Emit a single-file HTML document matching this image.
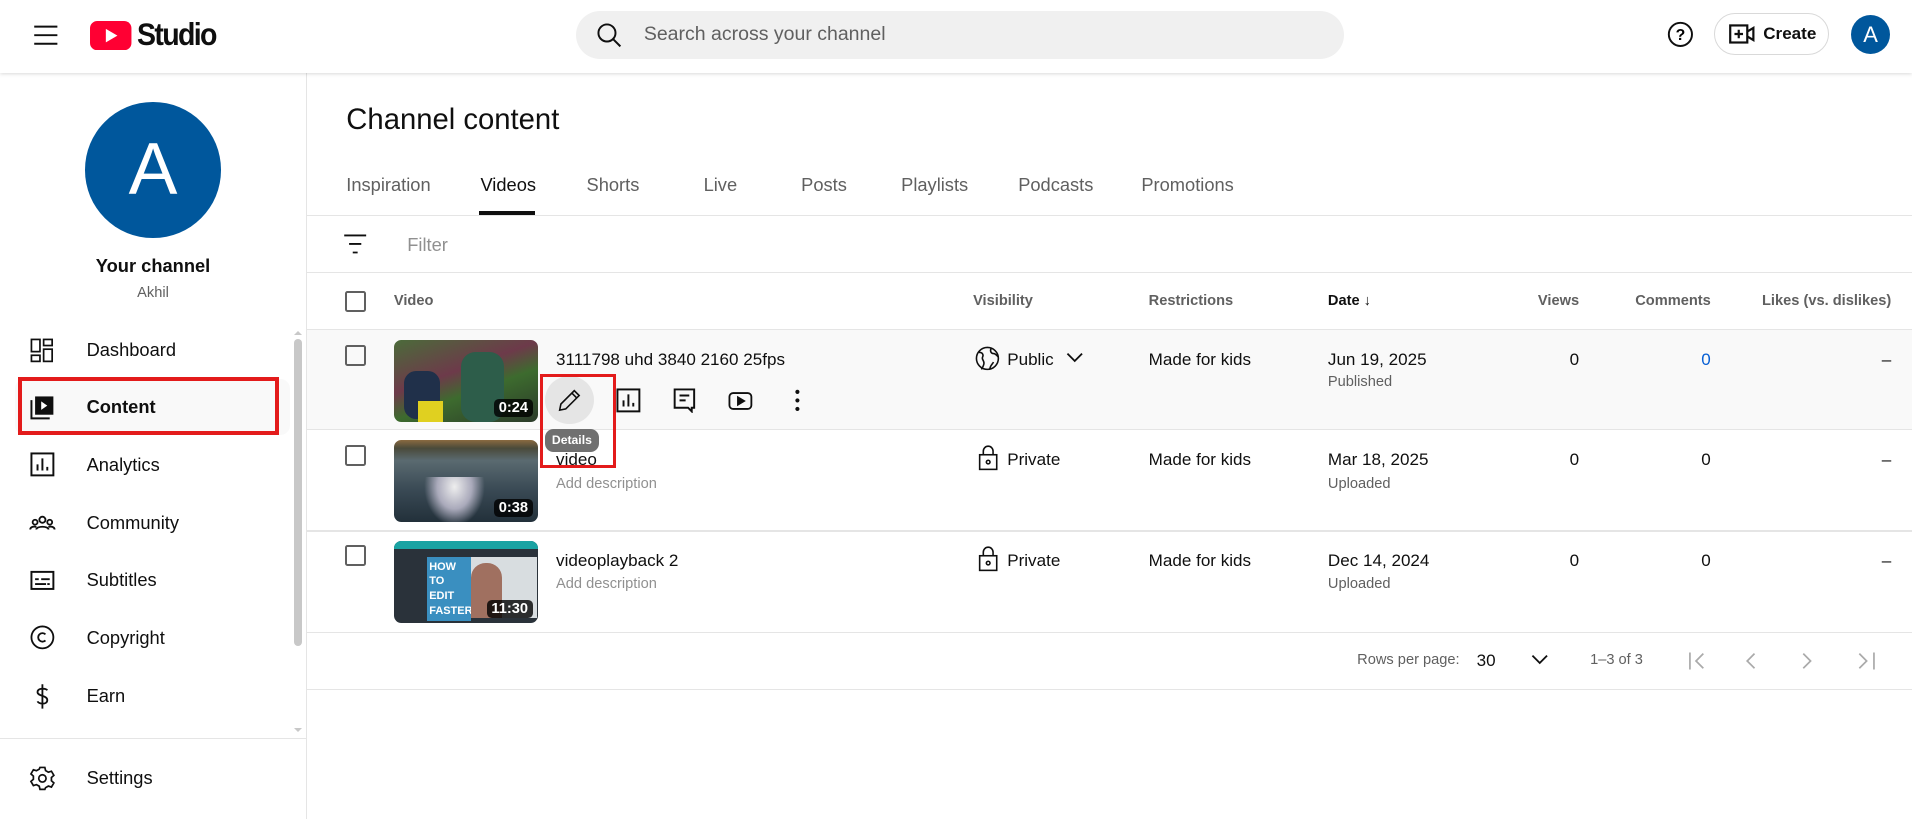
<!DOCTYPE html>
<html><head><meta charset="utf-8"><style>
html,body{margin:0;padding:0;background:#fff;overflow:hidden}
body{width:1568px;height:672px;zoom:1.219388;position:relative;font-family:"Liberation Sans",Roboto,Arial,sans-serif;color:#0f0f0f}
.a{position:absolute}
.hdr{left:0;top:0;width:1568px;height:60px;background:#fff;box-shadow:0 1px 3px rgba(0,0,0,.15);z-index:3}
.side{left:0;top:60px;width:251px;height:612px;border-right:1px solid #e5e5e5}
.nav{left:0;width:240px;height:46px;font-size:15px;line-height:46px}
.nav span{position:absolute;left:71px}
.nav svg{position:absolute;left:24px;top:12px}
.tab{top:143px;font-size:15px;color:#606060;font-weight:500}
.hl{left:252px;width:1316px;height:1px;background:#e5e5e5}
.th{top:240px;font-size:12px;color:#606060;font-weight:bold}
.cb{width:14px;height:14px;border:2px solid #606060;border-radius:2px}
.row{left:252px;width:1316px;height:82px}
.thumb{left:323px;width:118px;height:67px;border-radius:6px;overflow:hidden}
.dur{position:absolute;right:4px;bottom:4px;background:rgba(0,0,0,.8);color:#fff;font-size:12px;font-weight:bold;padding:1px 4px;border-radius:4px}
.t14{font-size:14px}
.sub{font-size:12px;color:#909090}
</style></head><body>
<div class="a hdr">
 <svg class="a" style="left:27px;top:19px" width="22" height="20" viewBox="0 0 22 20"><path d="M1 3h19M1 10h19M1 17h19" stroke="#0f0f0f" stroke-width="1.6"/></svg>
 <svg class="a" style="left:74px;top:17px" width="34" height="24" viewBox="0 0 34 24"><rect width="34" height="24" rx="6" fill="#ff0033"/><path d="M13 6.5v11l9.5-5.5z" fill="#fff"/></svg>
 <div class="a" style="left:112px;top:13px;font-size:26px;font-weight:bold;letter-spacing:-1.5px;transform:scaleX(.9);transform-origin:left">Studio</div>
 <div class="a" style="left:472px;top:9px;width:630px;height:39px;border-radius:20px;background:#f0f0f0"></div>
 <svg class="a" style="left:489px;top:18px" width="22" height="22" viewBox="0 0 22 22"><circle cx="9" cy="9" r="7" fill="none" stroke="#0f0f0f" stroke-width="1.6"/><path d="M14 14l6 6" stroke="#0f0f0f" stroke-width="1.6"/></svg>
 <div class="a" style="left:528px;top:19px;font-size:16px;color:#606060">Search across your channel</div>
 <svg class="a" style="left:1367px;top:17px" width="22" height="22" viewBox="0 0 22 22"><circle cx="11" cy="11" r="9.5" fill="none" stroke="#0f0f0f" stroke-width="1.6"/><text x="11" y="15.5" text-anchor="middle" font-size="13" font-weight="bold" font-family="Liberation Sans">?</text></svg>
 <div class="a" style="left:1406px;top:11px;width:94px;height:34px;border:1px solid #d9d9d9;border-radius:18px;box-sizing:border-box"></div>
 <svg class="a" style="left:1418px;top:19px" width="22" height="18" viewBox="0 0 22 18"><rect x="1" y="2" width="14" height="14" fill="none" stroke="#0f0f0f" stroke-width="1.8"/><path d="M15 7l5-3v10l-5-3M8 5.5v7M4.5 9h7" stroke="#0f0f0f" stroke-width="1.8" fill="none"/></svg>
 <div class="a" style="left:1446px;top:20px;font-size:14px;font-weight:bold">Create</div>
 <div class="a" style="left:1518px;top:12px;width:32px;height:32px;border-radius:50%;background:#00579c;color:#fff;font-size:18px;text-align:center;line-height:32px">A</div>
</div>

<div class="a side"></div>
<div class="a" style="left:70px;top:84px;width:111px;height:111px;border-radius:50%;background:#00579c;color:#fff;font-size:60px;text-align:center;line-height:111px">A</div>
<div class="a" style="left:0;width:251px;top:209px;text-align:center;font-size:15px;font-weight:bold">Your channel</div>
<div class="a" style="left:0;width:251px;top:234px;text-align:center;font-size:12px;color:#606060">Akhil</div>

<div class="a nav" style="top:264px"><svg width="22" height="22" viewBox="0 0 22 22" fill="none" stroke="#0f0f0f" stroke-width="1.4"><rect x="2" y="2" width="7" height="10"/><rect x="12" y="2" width="7" height="5"/><rect x="2" y="15" width="7" height="5"/><rect x="12" y="10" width="7" height="10"/></svg><span>Dashboard</span></div>
<div class="a" style="left:12px;top:311px;width:226px;height:46px;border-radius:8px;background:#f9f9f9"></div>
<div class="a nav" style="top:311px;font-weight:bold"><svg width="22" height="22" viewBox="0 0 22 22"><rect x="5" y="2" width="15" height="15" fill="#0f0f0f"/><path d="M2 5v15h15" stroke="#0f0f0f" stroke-width="1.6" fill="none"/><path d="M10 6v7l5-3.5z" fill="#fff"/></svg><span>Content</span></div>
<div class="a" style="left:15px;top:309px;width:214px;height:48px;border:4px solid #e31b1b;box-sizing:border-box"></div>
<div class="a nav" style="top:358px"><svg width="22" height="22" viewBox="0 0 22 22" fill="none" stroke="#0f0f0f" stroke-width="1.6"><rect x="2" y="2" width="18" height="18"/><path d="M7 16v-5M11 16V6M15 16v-3"/></svg><span>Analytics</span></div>
<div class="a nav" style="top:406px"><svg width="22" height="22" viewBox="0 0 22 22" fill="none" stroke="#0f0f0f" stroke-width="1.5"><circle cx="11" cy="8" r="2.5"/><circle cx="5" cy="10" r="2"/><circle cx="17" cy="10" r="2"/><path d="M6 16c0-3 10-3 10 0M1 16c0-2 3-3 5-2M21 16c0-2-3-3-5-2"/></svg><span>Community</span></div>
<div class="a nav" style="top:453px"><svg width="22" height="22" viewBox="0 0 22 22" fill="none" stroke="#0f0f0f" stroke-width="1.6"><rect x="2" y="4" width="18" height="14"/><path d="M5 10h3M10 10h7M5 14h9M15 14h2"/></svg><span>Subtitles</span></div>
<div class="a nav" style="top:500px"><svg width="22" height="22" viewBox="0 0 22 22" fill="none" stroke="#0f0f0f" stroke-width="1.5"><circle cx="11" cy="11" r="9"/><path d="M13.5 8.5a3.5 3.5 0 1 0 0 5"/></svg><span>Copyright</span></div>
<div class="a nav" style="top:548px"><svg width="22" height="22" viewBox="0 0 22 22" fill="none" stroke="#0f0f0f" stroke-width="1.5"><path d="M11 1v20M15 6c-1-2-8-2-8 1.5S15 10 15 14s-7 3.5-8 1"/></svg><span>Earn</span></div>
<div class="a" style="left:241px;top:278px;width:7px;height:252px;border-radius:4px;background:#c8c8c8"></div>
<div class="a" style="left:241px;top:268px;width:0;height:0;border:4px solid transparent;border-bottom-color:#c8c8c8"></div>
<div class="a" style="left:241px;top:597px;width:0;height:0;border:4px solid transparent;border-top-color:#c8c8c8"></div>
<div class="a" style="left:0;top:605px;width:251px;height:1px;background:#e5e5e5"></div>
<div class="a nav" style="top:615px"><svg width="22" height="22" viewBox="0 0 22 22" fill="none" stroke="#0f0f0f" stroke-width="1.4"><circle cx="11" cy="11" r="3"/><path d="M9 2h4l.6 2.6 2.3 1.3 2.5-.8 2 3.4-2 1.8v2.6l2 1.8-2 3.4-2.5-.8-2.3 1.3L13 20H9l-.6-2.6-2.3-1.3-2.5.8-2-3.4 2-1.8V9.1l-2-1.8 2-3.4 2.5.8 2.3-1.3z"/></svg><span>Settings</span></div>

<div class="a" style="left:284px;top:85px;font-size:24px;font-weight:500">Channel content</div>
<div class="a tab" style="left:284px">Inspiration</div>
<div class="a tab" style="left:394px;color:#0f0f0f">Videos</div>
<div class="a" style="left:393px;top:173px;width:46px;height:3px;background:#0f0f0f"></div>
<div class="a tab" style="left:481px">Shorts</div>
<div class="a tab" style="left:577px">Live</div>
<div class="a tab" style="left:657px">Posts</div>
<div class="a tab" style="left:739px">Playlists</div>
<div class="a tab" style="left:835px">Podcasts</div>
<div class="a tab" style="left:936px">Promotions</div>
<div class="a hl" style="top:176px"></div>
<svg class="a" style="left:281px;top:191px" width="20" height="18" viewBox="0 0 20 18"><path d="M1 2h18M5 9h10M8 16h4" stroke="#0f0f0f" stroke-width="1.5"/></svg>
<div class="a" style="left:334px;top:192px;font-size:15px;color:#909090">Filter</div>
<div class="a hl" style="top:223px"></div>
<div class="a cb" style="left:283px;top:239px"></div>
<div class="a th" style="left:323px">Video</div>
<div class="a th" style="left:798px">Visibility</div>
<div class="a th" style="left:942px">Restrictions</div>
<div class="a th" style="left:1089px;color:#0f0f0f">Date ↓</div>
<div class="a th" style="left:1195px;width:100px;text-align:right">Views</div>
<div class="a th" style="left:1303px;width:100px;text-align:right">Comments</div>
<div class="a th" style="left:1400px;width:151px;text-align:right">Likes (vs. dislikes)</div>
<div class="a hl" style="top:270px"></div>

<div class="a row" style="top:271px;background:#f9f9f9"></div>
<div class="a hl" style="top:352px"></div>
<div class="a hl" style="top:435px"></div>
<div class="a hl" style="top:518px"></div>
<div class="a hl" style="top:565px"></div>

<!-- row1 -->
<div class="a cb" style="left:283px;top:283px"></div>
<div class="a thumb" style="top:279px;background:linear-gradient(160deg,#4b6b3a 0%,#6d3a4a 40%,#3d6b2e 60%,#2b3a2a 100%)"><div style="position:absolute;left:8px;top:25px;width:30px;height:40px;background:#20304a;border-radius:10px"></div><div style="position:absolute;left:20px;top:50px;width:20px;height:17px;background:#e0d020"></div><div style="position:absolute;left:55px;top:10px;width:35px;height:57px;background:#2d5d4a;border-radius:12px"></div><span class="dur">0:24</span></div>
<div class="a t14" style="left:456px;top:287px">3111798 uhd 3840 2160 25fps</div>
<div class="a" style="left:447px;top:308px;width:40px;height:40px;border-radius:50%;background:#e5e5e5"></div>
<svg class="a" style="left:456px;top:317px" width="22" height="22" viewBox="0 0 22 22" fill="none" stroke="#0f0f0f" stroke-width="1.3"><path d="M3 19l1-5L15 3l4 4L8 18z M13 5l4 4"/></svg>
<svg class="a" style="left:504px;top:317px" width="22" height="22" viewBox="0 0 22 22" fill="none" stroke="#0f0f0f" stroke-width="1.6"><rect x="2" y="2" width="18" height="18"/><path d="M7 16v-5M11 16V6M15 16v-3"/></svg>
<svg class="a" style="left:550px;top:317px" width="22" height="22" viewBox="0 0 22 22" fill="none" stroke="#0f0f0f" stroke-width="1.6"><path d="M3 2h16v15h-2v3l-3-3H3z"/><path d="M7 7h8M7 11h5"/></svg>
<svg class="a" style="left:596px;top:317px" width="22" height="22" viewBox="0 0 22 22" fill="none" stroke="#0f0f0f" stroke-width="1.5"><rect x="2" y="5" width="18" height="13" rx="3"/><path d="M9 8.5v6l5-3z" fill="#0f0f0f"/></svg>
<svg class="a" style="left:643px;top:317px" width="22" height="22" viewBox="0 0 22 22" fill="#0f0f0f"><circle cx="11" cy="4" r="1.7"/><circle cx="11" cy="11" r="1.7"/><circle cx="11" cy="18" r="1.7"/></svg>
<svg class="a" style="left:799px;top:283px" width="22" height="22" viewBox="0 0 22 22" fill="none" stroke="#0f0f0f" stroke-width="1.3"><circle cx="11" cy="11" r="9"/><path d="M4 6c3 0 4 2 3 4s2 3 1 6-2 4-2 4M14 3c-1 2 0 4 2 4s3 2 4 3M13 20c0-3 2-4 3-6"/></svg>
<div class="a t14" style="left:826px;top:287px">Public</div>
<svg class="a" style="left:873px;top:287px" width="16" height="12" viewBox="0 0 16 12"><path d="M2 3l6 6 6-6" stroke="#0f0f0f" stroke-width="1.5" fill="none"/></svg>
<div class="a t14" style="left:942px;top:287px">Made for kids</div>
<div class="a t14" style="left:1089px;top:287px">Jun 19, 2025</div>
<div class="a sub" style="left:1089px;top:307px;color:#606060">Published</div>
<div class="a t14" style="left:1195px;top:287px;width:100px;text-align:right">0</div>
<div class="a t14" style="left:1303px;top:287px;width:100px;text-align:right;color:#065fd4">0</div>
<div class="a t14" style="left:1400px;top:287px;width:151px;text-align:right">–</div>

<!-- row2 -->
<div class="a cb" style="left:283px;top:365px"></div>
<div class="a thumb" style="top:361px;background:linear-gradient(180deg,#8a6a40 0%,#4a4a3a 10%,#5a6a70 25%,#3a4a55 60%,#22303a 100%)"><div style="position:absolute;left:25px;top:30px;width:50px;height:40px;background:radial-gradient(ellipse at 50% 20%,#eee,#aab 40%,transparent 70%)"></div><span class="dur">0:38</span></div>
<div class="a t14" style="left:456px;top:369px">video</div>
<div class="a sub" style="left:456px;top:390px">Add description</div>
<svg class="a" style="left:800px;top:365px" width="20" height="22" viewBox="0 0 20 22" fill="none" stroke="#0f0f0f" stroke-width="1.3"><rect x="3" y="8" width="14" height="12"/><path d="M6 8V5a4 4 0 0 1 8 0v3"/><circle cx="10" cy="14" r="1.5"/></svg>
<div class="a t14" style="left:826px;top:369px">Private</div>
<div class="a t14" style="left:942px;top:369px">Made for kids</div>
<div class="a t14" style="left:1089px;top:369px">Mar 18, 2025</div>
<div class="a sub" style="left:1089px;top:390px;color:#606060">Uploaded</div>
<div class="a t14" style="left:1195px;top:369px;width:100px;text-align:right">0</div>
<div class="a t14" style="left:1303px;top:369px;width:100px;text-align:right">0</div>
<div class="a t14" style="left:1400px;top:369px;width:151px;text-align:right">–</div>

<!-- row3 -->
<div class="a cb" style="left:283px;top:447px"></div>
<div class="a thumb" style="top:444px;background:#2a323a"><div style="position:absolute;left:0;top:0;width:118px;height:6px;background:#1aa3a3"></div><div style="position:absolute;left:27px;top:13px;width:90px;height:50px;background:#d8dde0"></div><div style="position:absolute;left:27px;top:13px;width:32px;height:48px;background:#3a8fc0;color:#fff;font-size:9px;font-weight:bold;line-height:12px;padding:2px">HOW TO EDIT FASTER!</div><div style="position:absolute;left:63px;top:18px;width:26px;height:45px;background:#a07060;border-radius:12px 12px 0 0"></div><span class="dur">11:30</span></div>
<div class="a t14" style="left:456px;top:452px">videoplayback 2</div>
<div class="a sub" style="left:456px;top:472px">Add description</div>
<svg class="a" style="left:800px;top:448px" width="20" height="22" viewBox="0 0 20 22" fill="none" stroke="#0f0f0f" stroke-width="1.3"><rect x="3" y="8" width="14" height="12"/><path d="M6 8V5a4 4 0 0 1 8 0v3"/><circle cx="10" cy="14" r="1.5"/></svg>
<div class="a t14" style="left:826px;top:452px">Private</div>
<div class="a t14" style="left:942px;top:452px">Made for kids</div>
<div class="a t14" style="left:1089px;top:452px">Dec 14, 2024</div>
<div class="a sub" style="left:1089px;top:472px;color:#606060">Uploaded</div>
<div class="a t14" style="left:1195px;top:452px;width:100px;text-align:right">0</div>
<div class="a t14" style="left:1303px;top:452px;width:100px;text-align:right">0</div>
<div class="a t14" style="left:1400px;top:452px;width:151px;text-align:right">–</div>

<!-- tooltip & red box -->
<div class="a" style="left:447px;top:352px;width:44px;height:19px;border-radius:7px;background:#707070;color:#fff;font-size:10px;font-weight:bold;text-align:center;line-height:19px">Details</div>
<div class="a" style="left:443px;top:307px;width:62px;height:77px;border:3px solid #e31b1b;box-sizing:border-box"></div>

<!-- pagination -->
<div class="a" style="left:1113px;top:535px;font-size:12px;color:#606060">Rows per page:</div>
<div class="a t14" style="left:1211px;top:534px">30</div>
<svg class="a" style="left:1255px;top:535px" width="16" height="12" viewBox="0 0 16 12"><path d="M2 3l6 6 6-6" stroke="#0f0f0f" stroke-width="1.5" fill="none"/></svg>
<div class="a" style="left:1304px;top:535px;font-size:12px;color:#606060">1–3 of 3</div>
<svg class="a" style="left:1382px;top:533px" width="160" height="18" viewBox="0 0 160 18" fill="none" stroke="#aaa" stroke-width="1.4"><path d="M4 2v14M15 3l-6 6 6 6M57 3l-6 6 6 6M97 3l6 6-6 6M143 3l6 6-6 6M155 2v14"/></svg>
</body></html>
